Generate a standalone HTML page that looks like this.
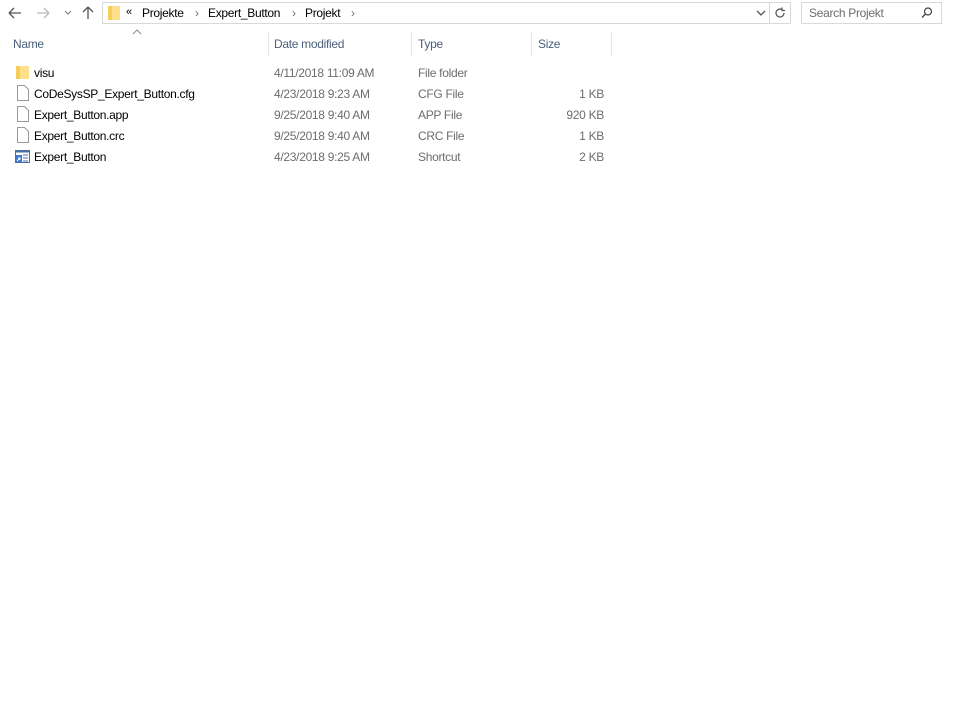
<!DOCTYPE html>
<html><head><style>
body{margin:0;width:955px;height:711px;background:#fff;font-family:"Liberation Sans",sans-serif;font-size:12px;letter-spacing:-0.3px;color:#000;position:relative;overflow:hidden}
.a{position:absolute;white-space:nowrap}
.g{color:#6d6d6d}
.h{color:#4c607a}
.sep{position:absolute;top:32px;width:1px;height:24px;background:#e5e5e5}
.r{text-align:right;width:70px}
</style></head><body>
<svg class="a" style="left:0;top:0" width="110" height="26">
<path d="M9 13h12M9 13l5-5M9 13l5 5" stroke="#555" stroke-width="1.3" fill="none"/>
<path d="M37 13h12M49 13l-5-5M49 13l-5 5" stroke="#bbb" stroke-width="1.3" fill="none"/>
<path d="M65 11l3 3 3-3" stroke="#888" stroke-width="1.2" fill="none"/>
<path d="M88 19V7M88 7l-5 5M88 7l5 5" stroke="#555" stroke-width="1.3" fill="none"/>
</svg>
<div class="a" style="left:102px;top:2px;width:687px;height:20px;border:1px solid #d9d9d9"></div>
<div class="a" style="left:769px;top:3px;width:1px;height:20px;background:#d9d9d9"></div>
<svg class="a" style="left:106px;top:4px" width="16" height="17"><rect x="2" y="2" width="12" height="14" fill="#ffe08a"/><rect x="2" y="2" width="4" height="14" fill="#f5cd5c"/></svg>
<div class="a" style="left:126px;top:6px;font-size:11px">«</div>
<div class="a" style="left:142px;top:6px">Projekte</div>
<div class="a g" style="left:195px;top:6px">›</div>
<div class="a" style="left:208px;top:6px">Expert_Button</div>
<div class="a g" style="left:292px;top:6px">›</div>
<div class="a" style="left:305px;top:6px">Projekt</div>
<div class="a g" style="left:351px;top:6px">›</div>
<svg class="a" style="left:755px;top:8px" width="12" height="10"><path d="M2 3l4 4 4-4" stroke="#555" stroke-width="1.3" fill="none"/></svg>
<svg class="a" style="left:774px;top:6px" width="14" height="14"><path d="M10 7a4 4 0 1 1-1.5-3.1M8 1.5v3h3" stroke="#555" stroke-width="1.2" fill="none"/></svg>
<div class="a" style="left:801px;top:2px;width:139px;height:20px;border:1px solid #d9d9d9"></div>
<div class="a g" style="left:809px;top:6px">Search Projekt</div>
<svg class="a" style="left:920px;top:6px" width="14" height="14"><circle cx="8" cy="5.5" r="3.5" stroke="#444" stroke-width="1.2" fill="none"/><path d="M5.5 8l-3.5 3.5" stroke="#444" stroke-width="1.4"/></svg>
<svg class="a" style="left:132px;top:29px" width="10" height="6"><path d="M1 5l4-4 4 4" stroke="#888" fill="none"/></svg>
<div class="a h" style="left:13px;top:37px">Name</div>
<div class="sep" style="left:268px"></div>
<div class="a h" style="left:274px;top:37px">Date modified</div>
<div class="sep" style="left:411px"></div>
<div class="a h" style="left:418px;top:37px">Type</div>
<div class="sep" style="left:531px"></div>
<div class="a h" style="left:538px;top:37px">Size</div>
<div class="sep" style="left:611px"></div>

<svg class="a" style="left:15px;top:64px" width="16" height="16"><rect x="1" y="2" width="13" height="13" fill="#ffe08a"/><rect x="1" y="2" width="4" height="13" fill="#f5cd5c"/></svg>
<div class="a" style="left:34px;top:66px">visu</div>
<div class="a g" style="left:274px;top:66px">4/11/2018 11:09 AM</div>
<div class="a g" style="left:418px;top:66px">File folder</div>

<svg class="a" style="left:16px;top:85px" width="14" height="16"><path d="M1.5 .5h7l4 4v11h-11z" fill="#fff" stroke="#999"/></svg>
<div class="a" style="left:34px;top:87px">CoDeSysSP_Expert_Button.cfg</div>
<div class="a g" style="left:274px;top:87px">4/23/2018 9:23 AM</div>
<div class="a g" style="left:418px;top:87px">CFG File</div>
<div class="a g r" style="left:534px;top:87px">1 KB</div>

<svg class="a" style="left:16px;top:106px" width="14" height="16"><path d="M1.5 .5h7l4 4v11h-11z" fill="#fff" stroke="#999"/></svg>
<div class="a" style="left:34px;top:108px">Expert_Button.app</div>
<div class="a g" style="left:274px;top:108px">9/25/2018 9:40 AM</div>
<div class="a g" style="left:418px;top:108px">APP File</div>
<div class="a g r" style="left:534px;top:108px">920 KB</div>

<svg class="a" style="left:16px;top:127px" width="14" height="16"><path d="M1.5 .5h7l4 4v11h-11z" fill="#fff" stroke="#999"/></svg>
<div class="a" style="left:34px;top:129px">Expert_Button.crc</div>
<div class="a g" style="left:274px;top:129px">9/25/2018 9:40 AM</div>
<div class="a g" style="left:418px;top:129px">CRC File</div>
<div class="a g r" style="left:534px;top:129px">1 KB</div>

<svg class="a" style="left:14px;top:149px" width="17" height="15"><rect x="1.5" y="1.5" width="14" height="12" fill="#fff" stroke="#4a6fa5"/><rect x="1.5" y="1.5" width="14" height="2" fill="#4a6fa5"/><path d="M9 6h5M9 9h5M9 12h5" stroke="#4a6fa5"/><rect x="2" y="6" width="6" height="7" fill="#3a7bd5"/><path d="M3 12l3-3M4 9h2v2" stroke="#fff" fill="none"/></svg>
<div class="a" style="left:34px;top:150px">Expert_Button</div>
<div class="a g" style="left:274px;top:150px">4/23/2018 9:25 AM</div>
<div class="a g" style="left:418px;top:150px">Shortcut</div>
<div class="a g r" style="left:534px;top:150px">2 KB</div>
</body></html>
